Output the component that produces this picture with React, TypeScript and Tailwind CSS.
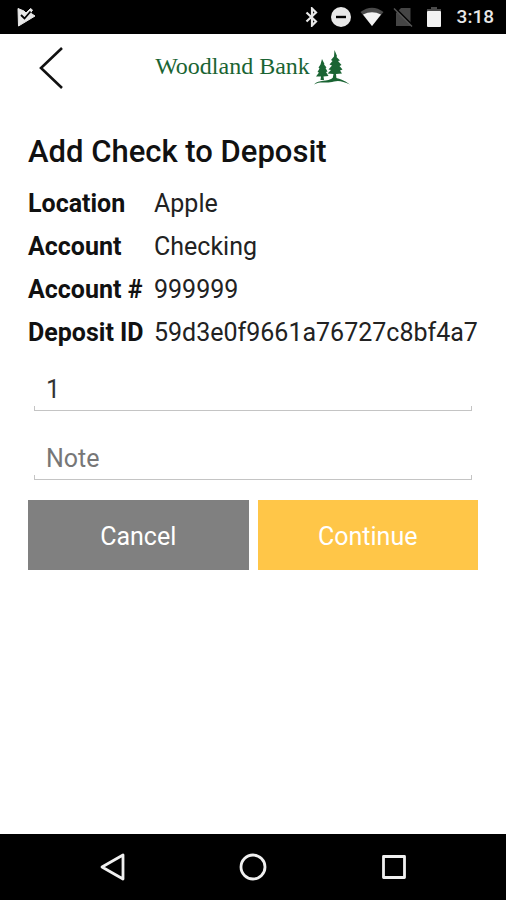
import React, { useState } from "react";

const details = [
  { label: "Location", value: "Apple" },
  { label: "Account", value: "Checking" },
  { label: "Account #", value: "999999" },
  { label: "Deposit ID", value: "59d3e0f9661a76727c8bf4a7" },
];

function StatusBar() {
  return (
    <div className="flex h-[34px] items-center justify-between bg-black pl-4 pr-3 text-[#e8e8e8]">
      <svg width="20" height="20" viewBox="0 0 20 20" aria-hidden="true">
        <path d="M2 1.5 L8 4 L10 6 L14.5 1.5 L16.5 3 L14.5 6 L19 9 L2.5 19 Z" fill="#e8e8e8" stroke="#e8e8e8" strokeWidth="1" strokeLinejoin="round" />
        <path d="M5 8 L8.5 11.5 L14.5 4.5" fill="none" stroke="#000" strokeWidth="1.8" />
      </svg>

      <div className="flex items-center">
        {/* bluetooth */}
        <svg width="14" height="20" viewBox="0 0 14 20" aria-hidden="true">
          <path d="M1.5 5.5 L11 14.5 L7 18.5 V1.5 L11 5.5 L1.5 14.5" fill="none" stroke="#e8e8e8" strokeWidth="2.2" />
        </svg>
        {/* do not disturb */}
        <svg className="ml-3" width="20" height="20" viewBox="0 0 20 20" aria-hidden="true">
          <circle cx="10" cy="10" r="10" fill="#e8e8e8" />
          <rect x="5" y="8.8" width="10" height="2.4" fill="#000" />
        </svg>
        {/* wifi */}
        <svg className="ml-2" width="26" height="20" viewBox="0 0 26 20" aria-hidden="true">
          <path d="M1.5 5 Q13 -3.5 24.5 5 L13 19 Z" fill="#4a4a4a" />
          <path d="M4 7.5 Q13 3 22 7.5 L13 19 Z" fill="#f2f2f2" />
        </svg>
        {/* no sim */}
        <svg className="ml-2" width="20" height="20" viewBox="0 0 20 20" aria-hidden="true">
          <path d="M8 1 H17.5 V19 H3 V6 Z" fill="#454545" />
          <path d="M2 1 L19 18" stroke="#000" strokeWidth="2" />
          <path d="M1 1.5 L19 19.5" stroke="#555" strokeWidth="1.5" />
        </svg>
        {/* battery */}
        <svg className="ml-[14px]" width="14" height="20" viewBox="0 0 14 20" aria-hidden="true">
          <path d="M4 0 H10 V2 H14 V5 H0 V2 H4 Z" fill="#4a4a4a" />
          <rect y="4" width="14" height="16" rx="1" fill="#f2f2f2" />
        </svg>
        <span className="ml-4 text-[19px] font-medium">3:18</span>
      </div>
    </div>
  );
}

function Logo() {
  return (
    <div className="flex items-center text-[#1a6433]">
      <span className="pb-1 font-['Liberation_Serif',serif] text-2xl leading-7">Woodland Bank</span>
      <svg className="ml-1" width="37" height="36" viewBox="0 0 37 36" fill="currentColor" aria-hidden="true">
        <path d="M8 9 L10.5 14 L10 14.5 L12.5 17.5 L11.5 18 L13.5 21.5 L12 22 L14.5 26 L9.5 26.5 L10 30 H6.5 L7 26.5 L2 26.5 L5 22.5 L3.5 22 L5.5 18.5 L4.5 17.5 L6.5 14.5 Z" />
        <path d="M20.5 0 L23 6 L22.5 7 L26 10.5 L24 11 L27.5 15 L25.5 16 L28.5 19.5 L26 20.5 L28 23.5 L22 24 L22.5 29 H18.5 L19.5 24 L13.5 23.5 L17 20 L14.5 19.5 L18 15.5 L15.5 14.5 L18.5 11 L17 10 L20 6.5 Z" />
        <path d="M0 34.5 C5 29 13 32.5 19.5 27.5 C24 28 30 30 36 34.5 C29 31.5 25 30 20 31.5 C12 34 7 30.5 0 34.5 Z" />
      </svg>
    </div>
  );
}

interface FieldProps {
  label: string;
  value: string;
  placeholder?: string;
  onChange: (value: string) => void;
}

function Field({ label, value, placeholder, onChange }: FieldProps) {
  return (
    <div className="mx-[6px]">
      <input
        type="text"
        aria-label={label}
        value={value}
        placeholder={placeholder}
        onChange={(e) => onChange(e.target.value)}
        className="block h-8 w-full px-3 text-[25px] leading-8 text-[#333] placeholder:text-[#777] focus:outline-none"
      />
      <div className="h-[5px] border border-t-0 border-[#c4c4c4]" />
    </div>
  );
}

export default function App() {
  const [amount, setAmount] = useState("1");
  const [note, setNote] = useState("");

  return (
    <div className="flex min-h-screen flex-col bg-white font-[Roboto,sans-serif] text-[#111]">
      <StatusBar />

      <header className="grid h-[68px] grid-cols-[1fr_auto_1fr] items-center px-7">
        <button type="button" aria-label="Back" className="w-12 pl-[10px]">
          <svg width="26" height="44" viewBox="0 0 26 44" fill="none" stroke="#111" strokeWidth="2.6" aria-hidden="true">
            <path d="M24 2 L3 22 L24 42" />
          </svg>
        </button>
        <Logo />
      </header>

      <main className="flex-1 px-7 pt-[30px]">
        <h1 className="text-[31px] leading-10 font-medium">Add Check to Deposit</h1>

        <dl className="mt-[10px] grid grid-cols-[126px_1fr] text-[25px] leading-[43px]">
          {details.map((item) => (
            <React.Fragment key={item.label}>
              <dt className="font-bold whitespace-nowrap">{item.label}</dt>
              <dd className="whitespace-nowrap text-[#222]">{item.value}</dd>
            </React.Fragment>
          ))}
        </dl>

        <form className="mt-5" onSubmit={(e) => e.preventDefault()}>
          <div className="space-y-8">
            <Field label="Amount" value={amount} onChange={setAmount} />
            <Field label="Note" value={note} placeholder="Note" onChange={setNote} />
          </div>

          <div className="mt-5 grid grid-cols-2 gap-[9px] text-[25px] text-white">
            <button type="button" className="h-[70px] bg-[#808080] pt-1">
              Cancel
            </button>
            <button type="submit" className="h-[70px] bg-[#ffc648] pt-1">
              Continue
            </button>
          </div>
        </form>
      </main>

      <nav className="grid h-[66px] grid-cols-3 items-center justify-items-center bg-black px-[42px]">
        <button type="button" aria-label="Back">
          <svg width="28" height="28" viewBox="0 0 28 28" fill="none" stroke="#f0f0f0" strokeWidth="2.8" strokeLinejoin="round" aria-hidden="true">
            <path d="M25 2 V26 L4 14 Z" />
          </svg>
        </button>
        <button type="button" aria-label="Home">
          <svg width="28" height="28" viewBox="0 0 28 28" fill="none" stroke="#f0f0f0" strokeWidth="2.8" aria-hidden="true">
            <circle cx="14" cy="14" r="12" />
          </svg>
        </button>
        <button type="button" aria-label="Recent apps">
          <svg width="28" height="28" viewBox="0 0 28 28" fill="none" stroke="#f0f0f0" strokeWidth="2.8" strokeLinejoin="round" aria-hidden="true">
            <rect x="3.5" y="3.5" width="21" height="21" />
          </svg>
        </button>
      </nav>
    </div>
  );
}
